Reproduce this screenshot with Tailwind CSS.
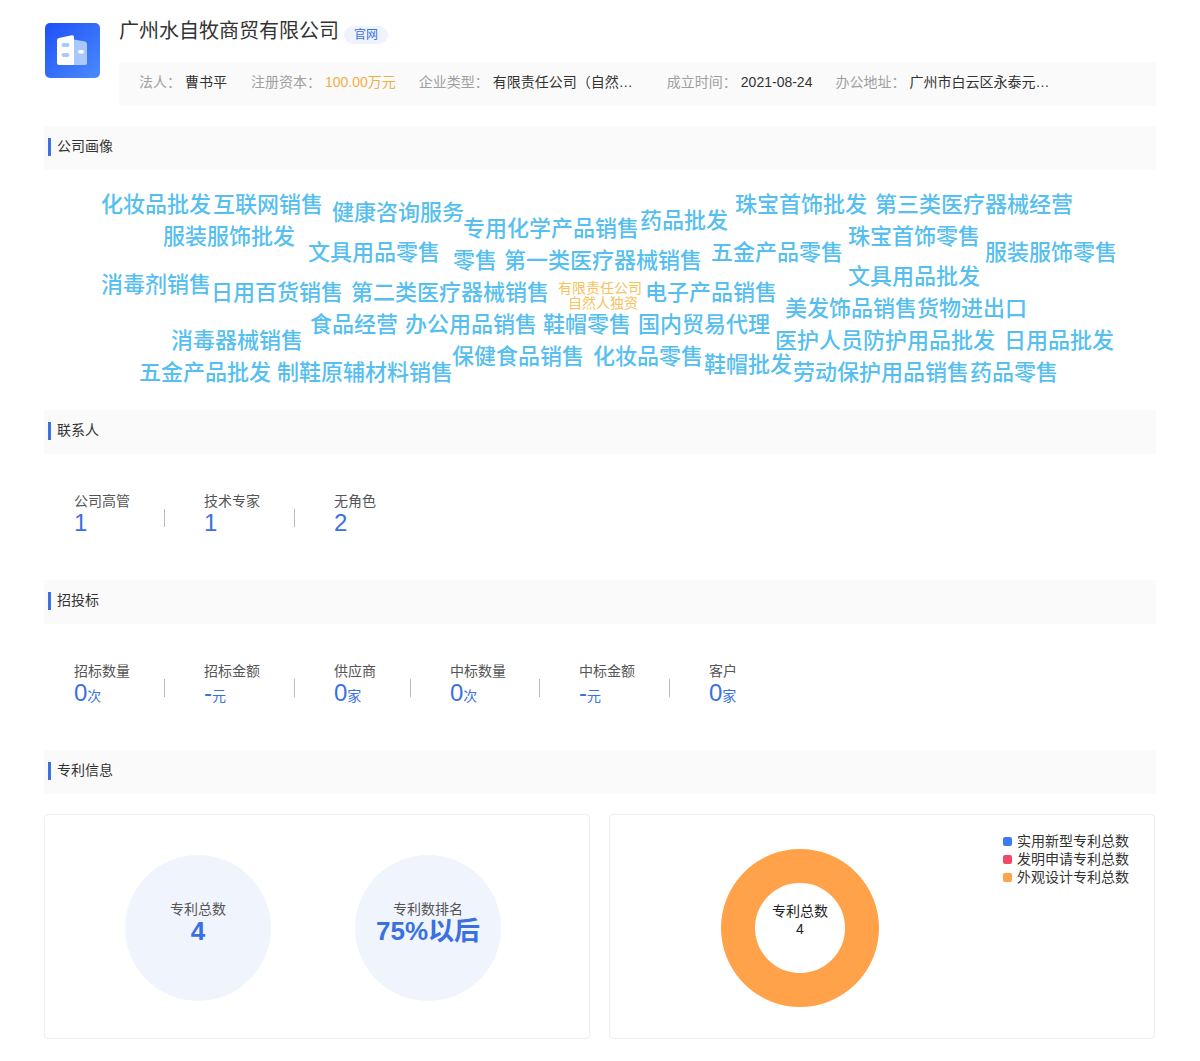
<!DOCTYPE html>
<html lang="zh-CN">
<head>
    <meta charset="UTF-8">
    <meta name="viewport" content="width=device-width, initial-scale=1.0">
    <title>广州水自牧商贸有限公司</title>
    <script src="https://cdn.jsdelivr.net/npm/@tailwindcss/browser@4"></script>
</head>
<body class="bg-white font-['Liberation_Sans','Noto_Sans_CJK_SC',sans-serif] text-[#333]">
<div class="w-[1112px] ml-[44px] pt-[21px] pb-[22px]">

    <!-- company header -->
    <div class="flex items-start">
        <svg class="w-[55px] h-[55px] ml-px mt-[2px] shrink-0" viewBox="0 0 55 55">
            <defs>
                <linearGradient id="logoBg" x1="0" y1="0" x2="1" y2="1">
                    <stop offset="0" stop-color="#1d50f6"/>
                    <stop offset="1" stop-color="#4b8bfb"/>
                </linearGradient>
            </defs>
            <rect width="55" height="55" rx="5" fill="url(#logoBg)"/>
            <path d="M29 16.5 L40 18.5 Q42 19 42 21 L42 40 Q42 42 40 42 L29 42 Z" fill="#a9c8fd"/>
            <path d="M14 15 L27 12.2 Q29 12 29 14 L29 42 L14 42 Q12 42 12 40 L12 17 Q12 15.4 14 15 Z" fill="#fff"/>
            <rect x="16.5" y="20" width="8" height="4" rx="2" fill="#a9c8fd"/>
            <rect x="16.5" y="30" width="8" height="4" rx="2" fill="#a9c8fd"/>
            <rect x="33" y="27" width="6" height="3.5" rx="1.7" fill="#fff"/>
        </svg>
        <div class="ml-[19px] flex-1">
            <div class="flex items-start">
                <h1 class="text-[20px] leading-[20px] font-normal text-[#333]">广州水自牧商贸有限公司</h1>
                <span class="ml-[5px] mt-[5px] w-[44px] h-[18px] rounded-full bg-[#eef3fc] text-[#3a70e2] text-[12px] leading-[18px] text-center">官网</span>
            </div>
            <div class="mt-[18px] h-[44px] bg-[#fafafa] pl-[20px] pb-[4px] flex items-center text-[14px] leading-[20px]">
                <span class="w-[46px] text-[#a0a0a0]">法人：</span>
                <span class="mr-[24px] text-[#333]">曹书平</span>
                <span class="w-[74px] text-[#a0a0a0]">注册资本：</span>
                <span class="mr-[23px] text-[#f3ad45]">100.00万元</span>
                <span class="w-[74px] text-[#a0a0a0]">企业类型：</span>
                <span class="w-[150px] mr-[24px] text-[#333] whitespace-nowrap">有限责任公司（自然…</span>
                <span class="w-[74px] text-[#a0a0a0]">成立时间：</span>
                <span class="mr-[23px] text-[#333]">2021-08-24</span>
                <span class="w-[74px] text-[#a0a0a0]">办公地址：</span>
                <span class="text-[#333] whitespace-nowrap">广州市白云区永泰元…</span>
            </div>
        </div>
    </div>

    <!-- 公司画像 -->
    <div class="mt-[20px] h-[44px] bg-[#fafafa] pl-[4px] flex items-center">
        <i class="w-[3px] h-[18px] bg-[#3a70e2] mt-[-2px]"></i>
        <h2 class="ml-[6px] text-[14px] leading-[20px] font-normal mt-[-4px]">公司画像</h2>
    </div>
    <div class="relative h-[240px] ml-[-1px] text-[22px] leading-[22px] font-medium text-[#56bff0] whitespace-nowrap">
        <span class="absolute left-[58px] top-[24px]">化妆品批发</span>
        <span class="absolute left-[170px] top-[24px]">互联网销售</span>
        <span class="absolute left-[289px] top-[32px]">健康咨询服务</span>
        <span class="absolute left-[420px] top-[48px]">专用化学产品销售</span>
        <span class="absolute left-[597px] top-[40px]">药品批发</span>
        <span class="absolute left-[692px] top-[24px]">珠宝首饰批发</span>
        <span class="absolute left-[832px] top-[24px]">第三类医疗器械经营</span>
        <span class="absolute left-[120px] top-[56px]">服装服饰批发</span>
        <span class="absolute left-[265px] top-[72px]">文具用品零售</span>
        <span class="absolute left-[410px] top-[80px]">零售</span>
        <span class="absolute left-[461px] top-[80px]">第一类医疗器械销售</span>
        <span class="absolute left-[668px] top-[72px]">五金产品零售</span>
        <span class="absolute left-[805px] top-[56px]">珠宝首饰零售</span>
        <span class="absolute left-[942px] top-[72px]">服装服饰零售</span>
        <span class="absolute left-[805px] top-[96px]">文具用品批发</span>
        <span class="absolute left-[58px] top-[104px]">消毒剂销售</span>
        <span class="absolute left-[168px] top-[112px]">日用百货销售</span>
        <span class="absolute left-[308px] top-[112px]">第二类医疗器械销售</span>
        <span class="absolute left-[515px] top-[111px] w-[84px] text-center text-[14px] leading-[15px] font-normal text-[#f6c25b]">有限责任公司<span class="block pl-[6px]">自然人独资</span></span>
        <span class="absolute left-[602px] top-[112px]">电子产品销售</span>
        <span class="absolute left-[742px] top-[128px]">美发饰品销售</span>
        <span class="absolute left-[874px] top-[128px]">货物进出口</span>
        <span class="absolute left-[267px] top-[144px]">食品经营</span>
        <span class="absolute left-[362px] top-[144px]">办公用品销售</span>
        <span class="absolute left-[500px] top-[144px]">鞋帽零售</span>
        <span class="absolute left-[595px] top-[144px]">国内贸易代理</span>
        <span class="absolute left-[128px] top-[160px]">消毒器械销售</span>
        <span class="absolute left-[732px] top-[160px]">医护人员防护用品批发</span>
        <span class="absolute left-[961px] top-[160px]">日用品批发</span>
        <span class="absolute left-[409px] top-[176px]">保健食品销售</span>
        <span class="absolute left-[550px] top-[176px]">化妆品零售</span>
        <span class="absolute left-[661px] top-[184px]">鞋帽批发</span>
        <span class="absolute left-[96px] top-[192px]">五金产品批发</span>
        <span class="absolute left-[234px] top-[192px]">制鞋原辅材料销售</span>
        <span class="absolute left-[750px] top-[192px]">劳动保护用品销售</span>
        <span class="absolute left-[927px] top-[192px]">药品零售</span>
    </div>

    <!-- 联系人 -->
    <div class="h-[44px] bg-[#fafafa] pl-[4px] flex items-center">
        <i class="w-[3px] h-[18px] bg-[#3a70e2] mt-[-2px]"></i>
        <h2 class="ml-[6px] text-[14px] leading-[20px] font-normal mt-[-4px]">联系人</h2>
    </div>
    <div class="h-[126px] pt-[37px] pl-[30px] flex items-start">
        <div class="flex flex-col">
            <span class="text-[14px] leading-[20px] text-[#555]">公司高管</span>
            <span class="text-[24px] leading-[24px] text-[#3a70e2]">1</span>
        </div>
        <i class="w-px h-[18px] bg-[#bbb] ml-[34px] mr-[39px] mt-[18px]"></i>
        <div class="flex flex-col">
            <span class="text-[14px] leading-[20px] text-[#555]">技术专家</span>
            <span class="text-[24px] leading-[24px] text-[#3a70e2]">1</span>
        </div>
        <i class="w-px h-[18px] bg-[#bbb] ml-[34px] mr-[39px] mt-[18px]"></i>
        <div class="flex flex-col">
            <span class="text-[14px] leading-[20px] text-[#555]">无角色</span>
            <span class="text-[24px] leading-[24px] text-[#3a70e2]">2</span>
        </div>
    </div>

    <!-- 招投标 -->
    <div class="h-[44px] bg-[#fafafa] pl-[4px] flex items-center">
        <i class="w-[3px] h-[18px] bg-[#3a70e2] mt-[-2px]"></i>
        <h2 class="ml-[6px] text-[14px] leading-[20px] font-normal mt-[-4px]">招投标</h2>
    </div>
    <div class="h-[126px] pt-[37px] pl-[30px] flex items-start">
        <div class="flex flex-col">
            <span class="text-[14px] leading-[20px] text-[#555]">招标数量</span>
            <span class="text-[24px] leading-[24px] text-[#3a70e2]">0<span class="text-[14px]">次</span></span>
        </div>
        <i class="w-px h-[18px] bg-[#bbb] ml-[34px] mr-[39px] mt-[18px]"></i>
        <div class="flex flex-col">
            <span class="text-[14px] leading-[20px] text-[#555]">招标金额</span>
            <span class="text-[24px] leading-[24px] text-[#3a70e2]">-<span class="text-[14px]">元</span></span>
        </div>
        <i class="w-px h-[18px] bg-[#bbb] ml-[34px] mr-[39px] mt-[18px]"></i>
        <div class="flex flex-col">
            <span class="text-[14px] leading-[20px] text-[#555]">供应商</span>
            <span class="text-[24px] leading-[24px] text-[#3a70e2]">0<span class="text-[14px]">家</span></span>
        </div>
        <i class="w-px h-[18px] bg-[#bbb] ml-[34px] mr-[39px] mt-[18px]"></i>
        <div class="flex flex-col">
            <span class="text-[14px] leading-[20px] text-[#555]">中标数量</span>
            <span class="text-[24px] leading-[24px] text-[#3a70e2]">0<span class="text-[14px]">次</span></span>
        </div>
        <i class="w-px h-[18px] bg-[#bbb] ml-[33px] mr-[39px] mt-[18px]"></i>
        <div class="flex flex-col">
            <span class="text-[14px] leading-[20px] text-[#555]">中标金额</span>
            <span class="text-[24px] leading-[24px] text-[#3a70e2]">-<span class="text-[14px]">元</span></span>
        </div>
        <i class="w-px h-[18px] bg-[#bbb] ml-[34px] mr-[39px] mt-[18px]"></i>
        <div class="flex flex-col">
            <span class="text-[14px] leading-[20px] text-[#555]">客户</span>
            <span class="text-[24px] leading-[24px] text-[#3a70e2]">0<span class="text-[14px]">家</span></span>
        </div>
    </div>

    <!-- 专利信息 -->
    <div class="h-[44px] bg-[#fafafa] pl-[4px] flex items-center">
        <i class="w-[3px] h-[18px] bg-[#3a70e2] mt-[-2px]"></i>
        <h2 class="ml-[6px] text-[14px] leading-[20px] font-normal mt-[-4px]">专利信息</h2>
    </div>
    <div class="mt-[20px] flex gap-[19px] w-[1111px]">
        <div class="w-[546px] h-[225px] border border-[#eee] rounded-[4px] pt-[40px] pl-[80px] flex gap-[84px]">
            <div class="w-[146px] h-[146px] rounded-full bg-[#f0f4fd] pt-[44px] flex flex-col items-center">
                <span class="text-[14px] leading-[20px] text-[#555]">专利总数</span>
                <span class="text-[26px] leading-[24px] font-bold text-[#3a70e2]">4</span>
            </div>
            <div class="w-[146px] h-[146px] rounded-full bg-[#f0f4fd] pt-[44px] flex flex-col items-center">
                <span class="text-[14px] leading-[20px] text-[#555]">专利数排名</span>
                <span class="text-[26px] leading-[24px] font-bold text-[#3a70e2] whitespace-nowrap">75%以后</span>
            </div>
        </div>
        <div class="relative w-[546px] h-[225px] border border-[#eee] rounded-[4px] pt-[34px] pl-[111px]">
            <div class="w-[158px] h-[158px] rounded-full border-[34px] border-[#ffa24a] pb-[16px] flex flex-col items-center justify-center text-[14px] leading-[18px] text-[#222]">
                <span class="whitespace-nowrap">专利总数</span>
                <span>4</span>
            </div>
            <ul class="absolute left-[393px] top-[17px] text-[14px] leading-[18px] text-[#333]">
                <li class="flex items-center gap-[5px]"><i class="w-[9px] h-[9px] rounded-[2px] bg-[#3d7bf5]"></i>实用新型专利总数</li>
                <li class="flex items-center gap-[5px]"><i class="w-[9px] h-[9px] rounded-[2px] bg-[#ee4a66]"></i>发明申请专利总数</li>
                <li class="flex items-center gap-[5px]"><i class="w-[9px] h-[9px] rounded-[2px] bg-[#ffa24a]"></i>外观设计专利总数</li>
            </ul>
        </div>
    </div>
</div>
</body>
</html>
